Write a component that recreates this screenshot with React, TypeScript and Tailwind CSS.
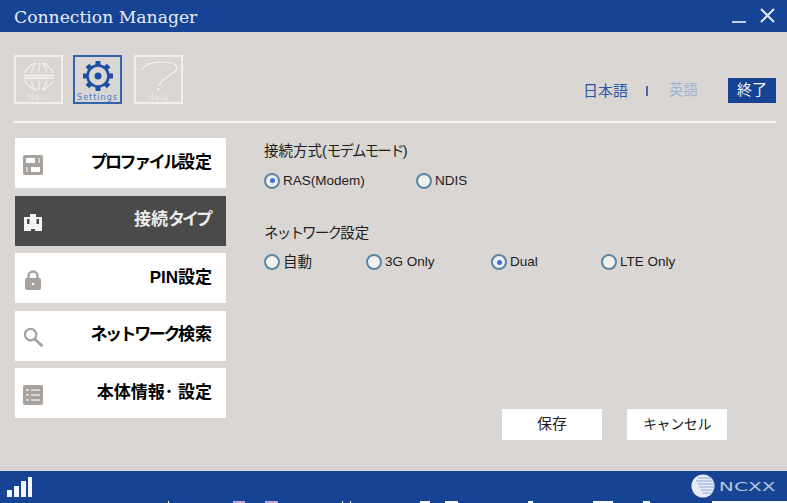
import { ReactNode } from 'react'

const jp = "font-['Liberation_Sans','Noto_Sans_CJK_JP',sans-serif]"

function Radio({ checked }: { checked?: boolean }) {
  return (
    <span className="flex h-4 w-4 shrink-0 items-center justify-center rounded-full border-2 border-[#5a86a6] bg-[#f1f1ef]">
      {checked && <span className="h-[5px] w-[5px] rounded-full bg-[#3f6fe0]" />}
    </span>
  )
}

function RadioItem({ label, checked, width }: { label: ReactNode; checked?: boolean; width: string }) {
  return (
    <div className={`flex h-4 items-center gap-[3px] ${width}`}>
      <Radio checked={checked} />
      <span className="text-[13.5px] leading-none text-[#1c1c1c]">{label}</span>
    </div>
  )
}

function Kana({ children }: { children: ReactNode }) {
  return <span className="tracking-[-2.4px]">{children}</span>
}

function Small({ children }: { children: ReactNode }) {
  return <span className="tracking-[-1.8px]">{children}</span>
}

function NavItem({ icon, label, active }: { icon: ReactNode; label: ReactNode; active?: boolean }) {
  return (
    <div
      className={`flex h-[50px] items-center justify-between pr-[14px] pl-2 ${
        active ? 'bg-[#4a4a4a] text-[#ececec]' : 'bg-white text-black'
      }`}
    >
      <span className="mt-[3px] flex h-5 w-5 items-center justify-center">{icon}</span>
      <span className="mb-[2px] text-[17px] leading-none font-bold">{label}</span>
    </div>
  )
}

function ProfileIcon() {
  return (
    <svg width="20" height="20" viewBox="0 0 20 20">
      <rect x="0" y="0" width="20" height="20" rx="2" fill="#a8a29e" />
      <rect x="3" y="3" width="9" height="5" fill="#ffffff" />
      <rect x="8" y="12" width="9" height="5" fill="#ffffff" />
      <rect x="15" y="3" width="2" height="5" fill="#d6d2ce" />
      <rect x="3" y="12" width="2" height="5" fill="#d6d2ce" />
    </svg>
  )
}

function ConnectIcon() {
  return (
    <svg width="20" height="20" viewBox="0 0 20 20">
      <path d="M1 5h6V2h6v3h6v14H1z" fill="#f4f4f4" />
      <rect x="4" y="7" width="2.5" height="5" fill="#4a4a4a" />
      <rect x="13.5" y="7" width="2.5" height="5" fill="#4a4a4a" />
      <rect x="8" y="17" width="4" height="2" fill="#4a4a4a" />
    </svg>
  )
}

function LockIcon() {
  return (
    <svg width="18" height="20" viewBox="0 0 18 20">
      <path d="M4.5 9V6a4.5 4.5 0 0 1 9 0v3" fill="none" stroke="#a8a29e" strokeWidth="2.5" />
      <rect x="1" y="8" width="16" height="12" rx="2" fill="#a8a29e" />
      <circle cx="9" cy="14" r="1.2" fill="#ffffff" />
    </svg>
  )
}

function SearchIcon() {
  return (
    <svg width="20" height="20" viewBox="0 0 21 21">
      <circle cx="8" cy="8" r="6" fill="none" stroke="#a8a29e" strokeWidth="2.4" />
      <path d="M12.5 12.5L19.5 19.5" stroke="#a8a29e" strokeWidth="3" strokeLinecap="round" />
    </svg>
  )
}

function ListIcon() {
  return (
    <svg width="20" height="20" viewBox="0 0 20 20">
      <rect x="0" y="0" width="20" height="20" rx="2" fill="#a8a29e" />
      <path d="M3 5h3M8 5h9M3 10h3M8 10h9M3 15h3M8 15h9" stroke="#e8e6e3" strokeWidth="1.6" />
    </svg>
  )
}

function GlobeIcon() {
  return (
    <svg width="32" height="29" viewBox="0 0 32 29" fill="none" stroke="#f4f3f1" strokeWidth="1.1">
      <path d="M1 13.5h30M1 16h30" strokeWidth="1.4" />
      <path d="M1.5 11C4 6 8 3 12 1M8.5 11c0-4 2-7 4.5-10M16 1v10M23.5 11c0-4-2-7-4.5-10M30.5 11C28 6 24 3 20 1" />
      <path d="M1.5 18.5C4 23 8 26 12 28M8.5 18.5c0 4 2 7 4.5 9.5M16 18.5V28M23.5 18.5c0 4-2 7-4.5 9.5M30.5 18.5C28 23 24 26 20 28" />
    </svg>
  )
}

function GearIcon() {
  const teeth = [0, 45, 90, 135, 180, 225, 270, 315]
  return (
    <svg width="32" height="32" viewBox="0 0 32 32">
      {teeth.map((deg) => (
        <rect key={deg} x="13.5" y="1" width="5" height="5" fill="#1f4fa3" transform={`rotate(${deg} 16 16)`} />
      ))}
      <circle cx="16" cy="16" r="10.5" fill="#d9d6d3" stroke="#1f4fa3" strokeWidth="2.6" />
      <circle cx="16" cy="16" r="3.5" fill="#1f4fa3" />
    </svg>
  )
}

function HelpIcon() {
  return (
    <svg width="38" height="30" viewBox="0 0 38 30" fill="none" stroke="#f4f3f1" strokeWidth="1.2">
      <path d="M1 9C6 3 12 1 20 1c10 0 17 2 17 6 0 6-15 8-18 18" />
      <path d="M18.5 27v3" strokeWidth="1.6" />
    </svg>
  )
}

function ToolButton({ icon, label, active, className }: { icon: ReactNode; label: string; active?: boolean; className?: string }) {
  return (
    <div
      className={`flex h-[49px] w-[49px] flex-col items-center justify-start border-2 pt-[3px] ${
        active ? 'border-[#3463ad]' : 'border-[#f0efed]'
      } ${className ?? ''}`}
    >
      <span className="flex h-[32px] items-center justify-center">{icon}</span>
      <span
        className={`mt-[2px] font-['DejaVu_Sans',sans-serif] text-[8px] leading-none tracking-[1px] ${
          active ? 'text-[#4f79bb]' : 'text-[#e9e7e4]'
        }`}
      >
        {label}
      </span>
    </div>
  )
}

export default function App() {
  return (
    <div className={`flex h-[503px] w-[787px] flex-col overflow-hidden bg-[#d9d6d3] ${jp}`}>
      <header className="flex h-[32px] shrink-0 items-center justify-between bg-[#164394] pr-[12px] pl-[14px]">
        <span className="mt-[3px] font-['DejaVu_Serif',serif] text-[17.2px] leading-none text-[#e6ecf6]">Connection Manager</span>
        <div className="flex items-center gap-[14px]">
          <span className="mt-[11px] h-[2px] w-[14px] bg-[#c3cee3]" />
          <svg className="mb-[2px]" width="15" height="15" viewBox="0 0 15 15" stroke="#dfe5f0" strokeWidth="2.2">
            <path d="M1 1l13 13M14 1L1 14" />
          </svg>
        </div>
      </header>

      <div className="mr-[11px] ml-[14px] flex h-[91px] shrink-0 items-start justify-between border-b-2 border-[#f7f6f5] pt-[23px]">
        <div className="flex">
          <ToolButton icon={<GlobeIcon />} label="Main" />
          <ToolButton className="ml-[10px]" icon={<GearIcon />} label="Settings" active />
          <ToolButton className="ml-[12px]" icon={<HelpIcon />} label="Help" />
        </div>
        <div className="mt-[23px] flex items-center">
          <span className="text-[15px] leading-none text-[#2a57a5]">日本語</span>
          <span className="mr-[21px] ml-[18px] h-[10px] w-[2px] bg-[#53679f]" />
          <span className="text-[14.5px] leading-none text-[#9db2d6]">英語</span>
          <span className="ml-[30px] flex h-[25px] w-[48px] items-center justify-center bg-[#164394] text-[15px] text-[#f0f3f8]">
            終了
          </span>
        </div>
      </div>

      <div className="flex min-h-0 flex-1 px-[15px] pt-[15px]">
        <nav className="flex w-[211px] shrink-0 flex-col gap-[7.5px]">
          <NavItem icon={<ProfileIcon />} label={<><Kana>プロファイル</Kana>設定</>} />
          <NavItem
            icon={<ConnectIcon />}
            label={<span className="mr-[2px]">接続<span className="tracking-[-3px]">タイプ</span></span>}
            active
          />
          <NavItem icon={<LockIcon />} label="PIN設定" />
          <NavItem icon={<SearchIcon />} label={<><Kana>ネットワーク</Kana>検索</>} />
          <NavItem icon={<ListIcon />} label="本体情報･ 設定" />
        </nav>

        <main className="flex min-w-0 flex-1 flex-col pl-[38px]">
          <p className="mt-[6px] text-[14.5px] leading-none text-[#1c1c1c]">
            接続方式(<Small>モデムモード</Small>)
          </p>
          <div className="mt-[14px] flex">
            <RadioItem label="RAS(Modem)" checked width="w-[152px]" />
            <RadioItem label="NDIS" width="w-[60px]" />
          </div>
          <p className="mt-[37px] text-[14.5px] leading-none text-[#1c1c1c]">
            <Small>ネットワーク</Small>設定
          </p>
          <div className="mt-[14px] flex">
            <RadioItem label={<span className="text-[14.5px]">自動</span>} width="w-[102px]" />
            <RadioItem label="3G Only" width="w-[125px]" />
            <RadioItem label="Dual" checked width="w-[110px]" />
            <RadioItem label="LTE Only" width="w-[90px]" />
          </div>
          <div className="mt-[139px] flex gap-[25px] pl-[238px]">
            <button className="h-[31px] w-[100px] bg-white text-[15px] text-[#1c1c1c]">保存</button>
            <button className="h-[31px] w-[100px] bg-white text-[14px] tracking-[-0.4px] text-[#1c1c1c]">キャンセル</button>
          </div>
        </main>
      </div>

      <footer className="flex h-[30px] shrink-0 items-center justify-between bg-[#164394] pr-[11px] pl-[6px]">
        <svg className="mt-[2px]" width="27" height="22" viewBox="0 0 27 22" fill="#f4f6fa">
          <rect x="1" y="14" width="5" height="7" />
          <rect x="8" y="10" width="5" height="11" />
          <rect x="15" y="5" width="5" height="16" />
          <rect x="22" y="1" width="4" height="20" />
        </svg>
        <div className="flex items-center gap-[3px]">
          <svg width="24" height="24" viewBox="0 0 24 24">
            <circle cx="12" cy="12" r="11.5" fill="#e6ebf5" />
            <path d="M7 4h14M5 7h18M7 10h17M8 13h16M10 16h13M12 19h8" stroke="#8fa6d2" strokeWidth="1" />
          </svg>
          <span className="flex w-[58px] justify-end">
            <span className="origin-right scale-x-[1.55] font-['DejaVu_Sans',sans-serif] text-[13px] leading-none text-[#b7c4de]">
              NCXX
            </span>
          </span>
        </div>
      </footer>
      <svg className="block shrink-0" width="787" height="2" viewBox="0 0 787 2">
        <rect width="787" height="2" fill="#164394" />
        <path d="M168 0h1v2h-1zM342 0h1v2h-1zM350 0h1v2h-1zM420 0h10v2h-10zM445 0h13v2h-13zM528 0h5v2h-5zM593 0h20v2h-20zM643 0h7v2h-7zM712 0h75v2h-75z" fill="#ffffff" />
        <path d="M233 0h12v2h-12zM265 0h13v2h-13z" fill="#c9a3c4" />
      </svg>
    </div>
  )
}
